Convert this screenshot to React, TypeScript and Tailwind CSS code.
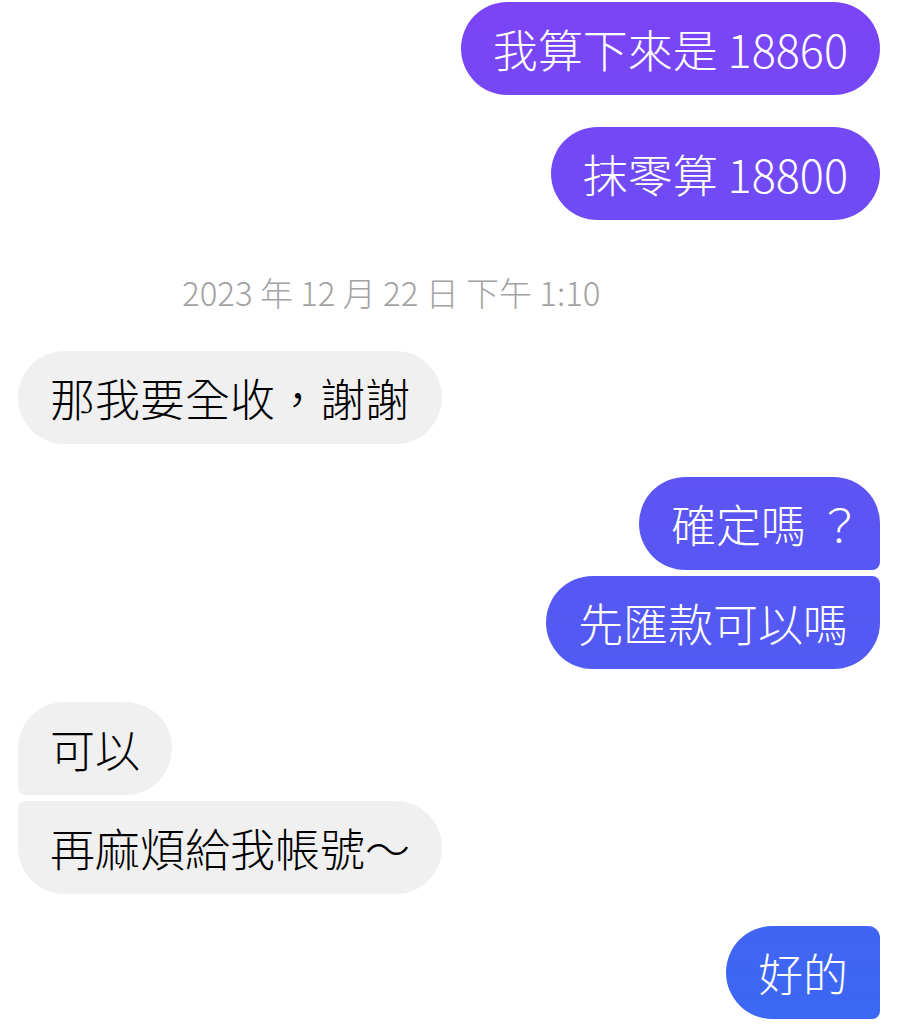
import React from 'react';

type Msg = {
  text: React.ReactNode;
  key: string;
  shape: string;
};

const font = { fontFamily: '"Noto Sans CJK TC", "Noto Sans", sans-serif' };

// Outgoing bubbles share one gradient pinned to the viewport, like Messenger
const outClass =
  'text-white bg-[linear-gradient(180deg,#7c44f6_0%,#5b55f3_50%,#3b68f2_100%)] bg-fixed';
const inClass = 'text-black bg-[#f0f0f0]';

const Bubble: React.FC<{ msg: Msg; mine: boolean }> = ({ msg, mine }) => (
  <div className={`flex ${mine ? 'justify-end' : 'justify-start'}`}>
    <div
      className={`px-[32px] py-[20px] text-[45px] font-light leading-[53px] whitespace-nowrap ${msg.shape} ${
        mine ? outClass : inClass
      }`}
    >
      {msg.text}
    </div>
  </div>
);

const Group: React.FC<{ msgs: Msg[]; mine: boolean; className?: string }> = ({
  msgs,
  mine,
  className = '',
}) => (
  <div className={`flex flex-col gap-[6px] ${className}`}>
    {msgs.map((m) => (
      <Bubble key={m.key} msg={m} mine={mine} />
    ))}
  </div>
);

const App: React.FC = () => {
  return (
    <div className="w-[901px] h-[1024px] overflow-hidden bg-white pl-[18px] pr-[21px] pt-[2px]" style={font}>
      <Group mine msgs={[{ key: 'a', text: '我算下來是 18860', shape: 'rounded-[47px]' }]} />
      <Group
        mine
        className="mt-[32px]"
        msgs={[{ key: 'b', text: '抹零算 18800', shape: 'rounded-[47px]' }]}
      />

      {/* Timestamp */}
      <div className="mt-[52px] pl-[164px] text-[33px] font-light leading-[40px] text-[#a3a3a3]">
        2023 年 12 月 22 日 下午 1:10
      </div>

      <Group
        mine={false}
        className="mt-[39px]"
        msgs={[{ key: 'c', text: '那我要全收，謝謝', shape: 'rounded-[47px]' }]}
      />

      <Group
        mine
        className="mt-[33px]"
        msgs={[
          {
            key: 'd',
            text: (
              <>
                確定嗎<span className="ml-[11px] -mr-[14px]">？</span>
              </>
            ),
            shape: 'rounded-[47px] rounded-br-[8px]',
          },
          { key: 'e', text: '先匯款可以嗎', shape: 'rounded-[47px] rounded-tr-[8px]' },
        ]}
      />

      <Group
        mine={false}
        className="mt-[33px]"
        msgs={[
          { key: 'f', text: '可以', shape: 'rounded-[47px] rounded-bl-[8px]' },
          { key: 'g', text: '再麻煩給我帳號～', shape: 'rounded-[47px] rounded-tl-[8px]' },
        ]}
      />

      <Group
        mine
        className="mt-[32px]"
        msgs={[{ key: 'h', text: '好的', shape: 'rounded-[47px] rounded-tr-[12px] rounded-br-[8px]' }]}
      />
    </div>
  );
};

export default App;
